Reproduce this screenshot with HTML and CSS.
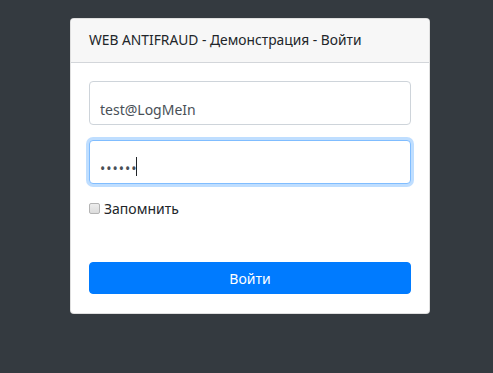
FILE: index.html
```html
<!DOCTYPE html>
<html lang="ru">

<head>
    <meta charset="UTF-8">
    <meta name="viewport" content="width=device-width, initial-scale=1.0">
    <title>WEB ANTIFRAUD - Войти</title>
    <link rel="stylesheet" href="styles.css">
</head>

<body>

    <div class="card">
        <div class="card-header">WEB ANTIFRAUD - Демонстрация - Войти</div>
        <form class="card-body">
            <input class="form-control" type="text" value="test@LogMeIn">
            <div class="field">
                <input class="form-control focused" type="password" value="123456">
                <span class="caret"></span>
            </div>
            <label class="remember">
                <input type="checkbox">
                <span>Запомнить</span>
            </label>
            <button class="btn" type="button">Войти</button>
        </form>
    </div>

</body>

</html>
```

FILE: styles.css
```css
html {
    font-size: 14px;
}

body {
    margin: 0;
    padding: 18px 0 0 70px;
    height: 100vh;
    box-sizing: border-box;
    background-color: #343a40;
    font-family: "Noto Sans", "Open Sans", sans-serif;
    color: #212529;
}

.card {
    width: 360px;
    background-color: #fff;
    border: 1px solid rgba(0, 0, 0, .125);
    border-radius: 4px;
    box-sizing: border-box;
}

.card-header {
    padding: 10px 18px 11px;
    line-height: 22px;
    font-size: 13.8px;
    background-color: #f7f7f7;
    border-bottom: 1px solid #d3d6da;
    border-radius: 4px 4px 0 0;
}

.card-body {
    display: flex;
    flex-direction: column;
    padding: 18px 18px 19px;
    margin: 0;
}

.form-control {
    width: 100%;
    height: 44px;
    padding: 16px 10px 4px;
    margin: 0 0 15px;
    box-sizing: border-box;
    border: 1px solid #ced4da;
    border-radius: 4px;
    font-family: inherit;
    font-size: 14px;
    color: #495057;
    outline: none;
}

.field {
    position: relative;
}

.focused {
    border-color: #80bdff;
    box-shadow: 0 0 0 3px rgba(0, 123, 255, .25);
    letter-spacing: 1px;
}

.caret {
    position: absolute;
    left: 47px;
    top: 17px;
    width: 1px;
    height: 19px;
    background-color: #212529;
}

.remember {
    display: flex;
    align-items: center;
    gap: 4px;
    font-size: 14px;
    line-height: 20px;
}

.remember input {
    appearance: none;
    margin: 0 0 1px;
    width: 11px;
    height: 11px;
    border: 1px solid #b4b4b4;
    border-radius: 2px;
    background: linear-gradient(#ededed, #dcdcdc);
}

.btn {
    margin-top: 43px;
    height: 32px;
    border: 1px solid #007bff;
    border-radius: 4px;
    background-color: #007bff;
    color: #fff;
    font-family: inherit;
    font-size: 14px;
}
```
